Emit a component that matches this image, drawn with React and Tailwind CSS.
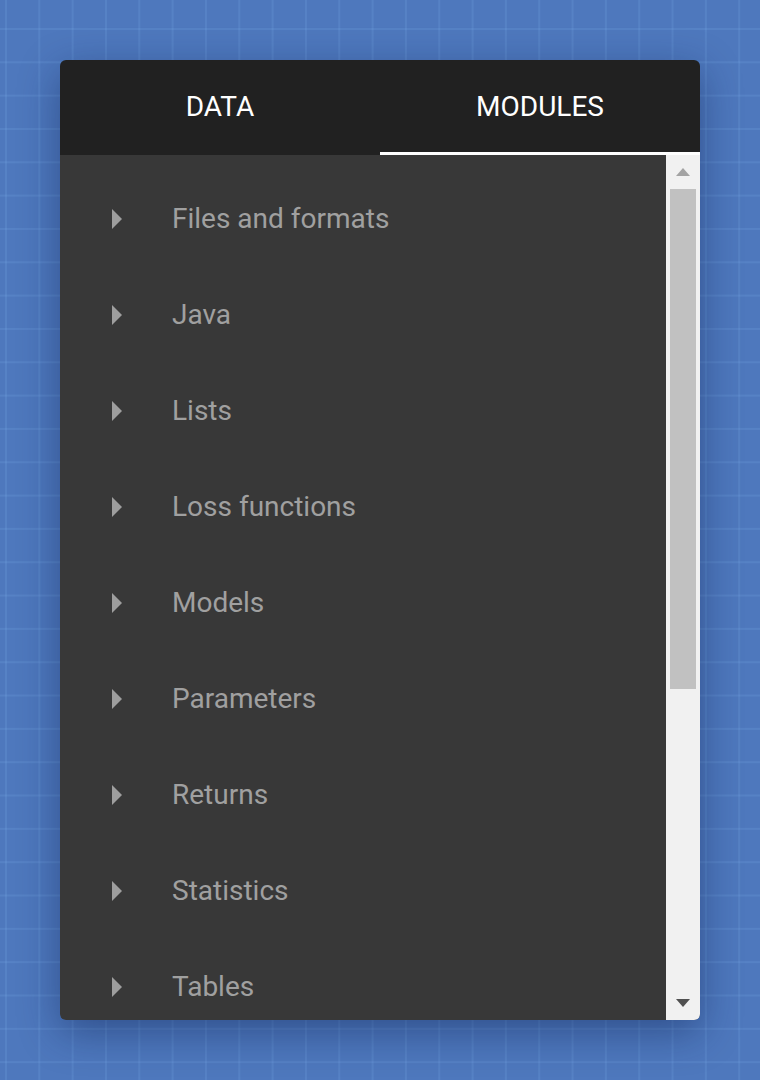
import { useState } from "react";

const modules = [
  "Files and formats",
  "Java",
  "Lists",
  "Loss functions",
  "Models",
  "Parameters",
  "Returns",
  "Statistics",
  "Tables",
];

function Caret() {
  return (
    <svg className="w-[10px] h-[20px]" viewBox="0 0 10 20" aria-hidden="true">
      <path d="M0 0 L10 10 L0 20 Z" fill="currentColor" />
    </svg>
  );
}

export default function App() {
  const [tab, setTab] = useState("modules");

  return (
    <div className="min-h-[1080px] w-full bg-[#4e78bd] bg-[image:linear-gradient(to_right,rgba(120,170,230,0.2)_2px,transparent_2px),linear-gradient(to_bottom,rgba(120,170,230,0.2)_2px,transparent_2px)] bg-[size:33.333px_33.333px] bg-[position:5px_28px] pt-[60px] px-[60px] font-['Roboto','Liberation_Sans',sans-serif]">
      <div className="w-[640px] h-[960px] rounded-md overflow-hidden flex flex-col shadow-[0_12px_40px_rgba(10,30,80,0.45)]">
        <div className="h-[95px] bg-[#212121] flex shrink-0">
          {[
            { id: "data", label: "DATA" },
            { id: "modules", label: "MODULES" },
          ].map((t) => (
            <button
              key={t.id}
              onClick={() => setTab(t.id)}
              className="flex-1 relative flex items-center justify-center pb-[2px] text-white text-[28px]"
            >
              {t.label}
              {tab === t.id && (
                <span className="absolute left-0 right-0 bottom-0 h-[3px] bg-white" />
              )}
            </button>
          ))}
        </div>
        <div className="flex-1 flex min-h-0 bg-[#383838]">
          <ul className="flex-1 overflow-hidden pt-[16px]">
            {modules.map((m) => (
              <li key={m} className="h-[96px] flex items-center text-[#a0a0a0]">
                <span className="ml-[52px] text-[#9e9e9e] flex">
                  <Caret />
                </span>
                <span className="ml-[50px] text-[28px]">{m}</span>
              </li>
            ))}
          </ul>
          <div className="w-[34px] bg-[#f1f1f1] flex flex-col items-center shrink-0">
            <div className="h-[34px] flex items-center justify-center">
              <svg className="w-[14px] h-[8px]" viewBox="0 0 14 8" aria-hidden="true">
                <path d="M7 0 L14 8 L0 8 Z" fill="#a3a3a3" />
              </svg>
            </div>
            <div className="w-[26px] h-[500px] bg-[#c1c1c1]" />
            <div className="flex-1" />
            <div className="h-[34px] flex items-center justify-center">
              <svg className="w-[14px] h-[8px]" viewBox="0 0 14 8" aria-hidden="true">
                <path d="M0 0 L14 0 L7 8 Z" fill="#505050" />
              </svg>
            </div>
          </div>
        </div>
      </div>
    </div>
  );
}
